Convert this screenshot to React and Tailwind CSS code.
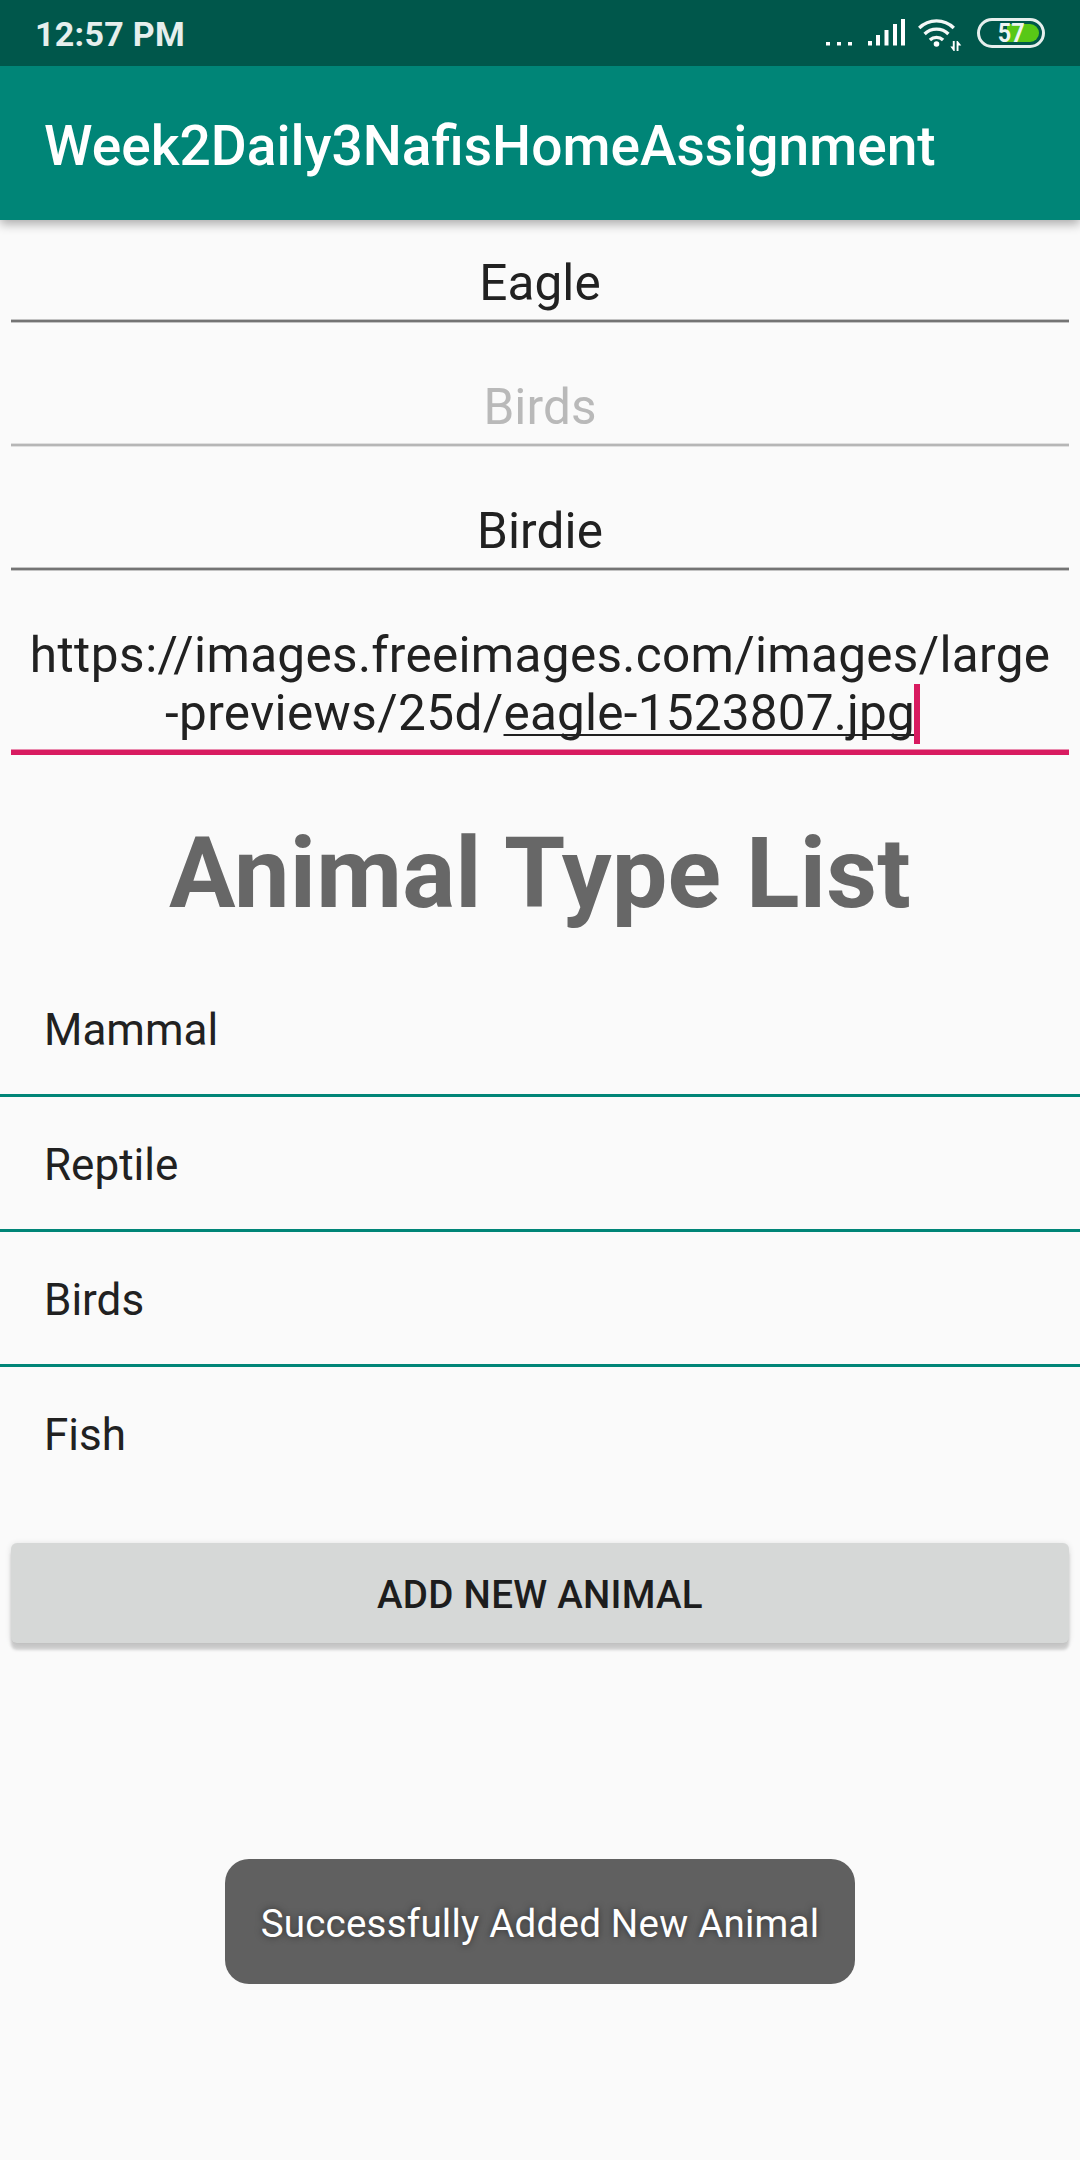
const fields = [
  { text: "Eagle", color: "text-[#212121]", line: "bg-[#747474]", edge: "border-[#c3c3c3]" },
  { text: "Birds", color: "text-[#b9b9b9]", line: "bg-[#b6b6b6]", edge: "border-[#dfdfdf]" },
  { text: "Birdie", color: "text-[#212121]", line: "bg-[#747474]", edge: "border-[#c3c3c3]" },
];

const types = ["Mammal", "Reptile", "Birds", "Fish"];

function StatusIcons() {
  return (
    <svg className="ml-auto block h-[66px] w-[280px]" viewBox="800 0 280 66" fill="none">
      <g fill="#fff">
        <path d="M826 42h4v3.5h-4zM837 42h4v3.5h-4zM848 42h4v3.5h-4z" />
        <path d="M868 41h4v4.5h-4zM876 35h4v10.5h-4zM884.5 30h4v15.5h-4zM893 24h4v21.5h-4zM901 19h4v26.5h-4z" />
        <circle cx="936.5" cy="44" r="2.8" />
        <path d="M952.8 41h1.9v10h-1.1l-3.2-4.6h2.4zM956.6 51V41h1.1l3.6 4.6h-2.8V51z" />
      </g>
      <g stroke="#f4f8f7" strokeWidth="3.3">
        <path d="M919.2 28a24.5 24.5 0 0 1 34.6 0" />
        <path d="M924.6 34a17 17 0 0 1 23.8 0" />
        <path d="M929.9 40a9.6 9.6 0 0 1 13.2 0" />
      </g>
      <rect x="978.5" y="19.5" width="65" height="27" rx="13.5" stroke="#e6efed" strokeWidth="3" />
      <path d="M1007 24h23a9 9 0 0 1 0 18h-23z" fill="#58c816" />
      <text
        x="997.8"
        y="42"
        textLength="27"
        lengthAdjust="spacingAndGlyphs"
        fill="#eef5f2"
        className="font-['Roboto'] text-[25px] font-bold"
      >
        57
      </text>
    </svg>
  );
}

export default function App() {
  return (
    <div className="relative flex h-[2160px] w-[1080px] flex-col overflow-hidden bg-[#fafafa] font-['Roboto',sans-serif] text-[#212121]">
      <header className="shadow-[0_4px_10px_rgba(0,0,0,0.32)]">
        <div className="flex h-[66px] items-center bg-[#00574b] pl-[35px]">
          <span className="pt-px text-[34px] leading-[40px] font-bold tracking-[0.3px] text-[#e6efed]">12:57 PM</span>
          <StatusIcons />
        </div>
        <div className="h-[154px] bg-[#008577] px-[44px] pt-[48px]">
          <h1 className="text-[55.1px] leading-[64px] font-medium whitespace-nowrap text-white">
            Week2Daily3NafisHomeAssignment
          </h1>
        </div>
      </header>

      <main className="flex flex-col">
        {fields.map((f) => (
          <div key={f.text} className="h-[124px] px-[11px] pt-[34px]">
            <div className={`text-center text-[49.5px] leading-[58px] tracking-[0.1px] ${f.color}`}>{f.text}</div>
            <div className={`mt-[7px] h-[4px] border-y ${f.line} ${f.edge}`} />
          </div>
        ))}
        <div className="h-[223px] px-[11px] pt-[34px]">
          <div className="text-center text-[49.5px] leading-[58px] whitespace-nowrap">
            <div className="tracking-[0.31px]">
              <span className="tracking-[0.5px]">https://</span>images.freeimages.com/images/large
            </div>
            <div>
              <span className="tracking-[0.39px]">-previews/25d/</span>
              <span className="relative tracking-[0.2px] underline decoration-2 underline-offset-[4px] [text-decoration-skip-ink:none]">
                eagle-1523807.jpg
                <span className="absolute -right-[5px] -bottom-[2px] h-[60px] w-[6px] bg-[#d81b60]" />
              </span>
            </div>
          </div>
          <div className="mt-[7px] h-[6px] border-t border-[#e98bae] bg-[#d81b60]" />
        </div>

        <h2 className="text-center text-[99px] leading-[116px] font-bold tracking-[0.2px] text-[#676767]">
          Animal Type List
        </h2>

        <ul className="mt-[31px] divide-y-[3px] divide-[#008577]">
          {types.map((t) => (
            <li key={t} className="box-content h-[132px]">
              <div className="px-[44px] pt-[42px] text-[44px] leading-[52px]">{t}</div>
            </li>
          ))}
        </ul>

        <button className="mx-[11px] mt-[44px] h-[100px] rounded-[6px] bg-[#d6d8d7] pt-[4px] text-[38.5px] leading-[46px] font-medium tracking-[0.28px] text-[#1d1d1d] shadow-[0_7px_3px_rgba(0,0,0,0.17),0_1px_6px_rgba(0,0,0,0.12)]">
          ADD NEW ANIMAL
        </button>
      </main>

      <div className="absolute top-[1859px] left-[225px] h-[125px] w-[630px] rounded-[24px] bg-[#606060] pt-[42px] text-center text-[38.5px] leading-[46px] tracking-[0.23px] whitespace-nowrap text-white [text-shadow:0_0_7px_rgba(0,0,0,0.5)]">
        Successfully Added New Animal
      </div>
    </div>
  );
}
